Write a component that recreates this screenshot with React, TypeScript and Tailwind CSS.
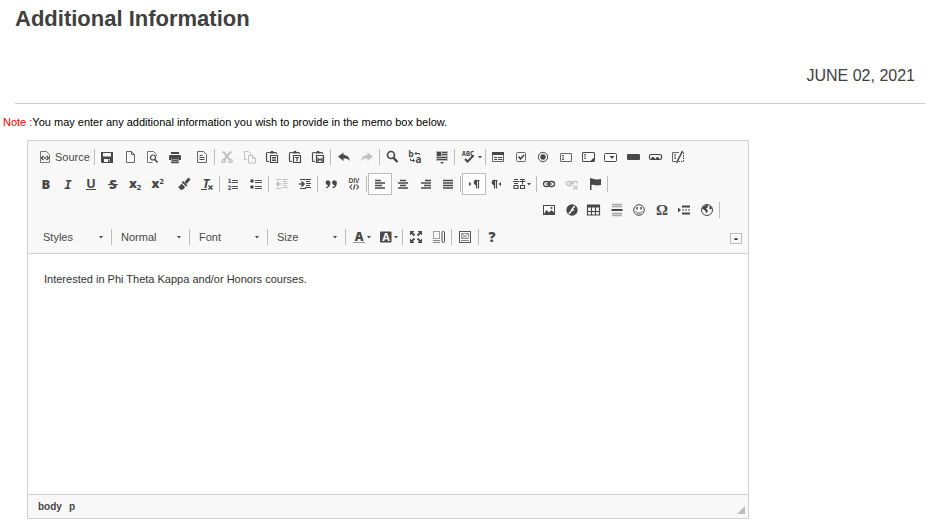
import React from "react";

const INK = "#484848";

type Part = { children: React.ReactNode; className?: string };

function Svg({ children, wide }: { children: React.ReactNode; wide?: boolean }) {
  return (
    <svg
      width={wide ? 20 : 16}
      height={16}
      viewBox={wide ? "0 0 20 16" : "0 0 16 16"}
      fill="none"
      stroke={INK}
      strokeWidth={1}
      aria-hidden="true"
      className="shrink-0 overflow-visible"
    >
      {children}
    </svg>
  );
}

type GlyphProps = {
  x: number;
  y: number;
  size: number;
  children: string;
  family?: string;
  weight?: number;
  italic?: boolean;
  color?: string;
};

function Glyph({ x, y, size, children, family = "DejaVu Sans, sans-serif", weight = 700, italic, color = INK }: GlyphProps) {
  return (
    <text
      x={x}
      y={y}
      fontSize={size}
      fontFamily={family}
      fontWeight={weight}
      fontStyle={italic ? "italic" : "normal"}
      fill={color}
      stroke="none"
      textAnchor="middle"
    >
      {children}
    </text>
  );
}

const page = "M4.500 2.500h5l3 3v8h-8z M9.500 2.500v3h3";
const OPEN = "Open Sans, sans-serif";

const clipboard = (
  <>
    <path d="M5 12.500H3.500a1 1 0 0 1-1-1v-7a1 1 0 0 1 1-1h2M10 3.500h1.500a1 1 0 0 1 1 1v.5" strokeWidth={1.200} />
    <path d="M5.500 4.500v-1.500h1l.5-1h2l.5 1h1v1.500z" fill={INK} stroke="none" />
    <path d="M6.500 6.500h7v7h-7z" fill="#f8f8f8" strokeWidth={1.200} />
  </>
);

const icons: Record<string, React.ReactNode> = {
  source: (
    <>
      <path d="M3.500 2.500h6l3 3v8h-9z" stroke="#777" />
      <path d="M6.500 7l-2 2 2 2M9.500 7l2 2-2 2M7 9h2" strokeWidth={1.400} />
    </>
  ),
  save: (
    <>
      <path d="M2 3h12v11H3l-1-1z" fill={INK} stroke="none" />
      <path d="M4 4h8v3.500H4zM5 10h6v3H5z" fill="#f8f8f8" stroke="none" />
      <path d="M9 10.500h1.500V13H9z" fill={INK} stroke="none" />
    </>
  ),
  newpage: <path d={page} stroke="#666" />,
  preview: (
    <>
      <path d="M12.500 7V5.500l-3-3h-6v11h5" stroke="#777" />
      <circle cx="9" cy="8.500" r="2.500" strokeWidth={1.200} />
      <path d="M10.800 10.500l2.700 3" strokeWidth={1.600} />
    </>
  ),
  print: (
    <>
      <path d="M4 3h8v2H4zM2.500 6h11l.5 1v4h-2V9H4v2H2V7z" fill={INK} stroke="none" />
      <path d="M5 9.500h6v4H5z M6 11.500h4" strokeWidth={1.300} />
    </>
  ),
  templates: (
    <>
      <path d="M3.500 2.500h6l3 3v8h-9z" stroke="#666" />
      <path d="M5.500 6.500h3M5.500 8.500h5M5.500 10.500h5" strokeWidth={1.200} />
    </>
  ),
  cut: (
    <>
      <path d="M4 2.500l6.500 8M12 2.500l-6.500 8" strokeWidth={2} />
      <circle cx="4.500" cy="12" r="1.600" strokeWidth={1.500} />
      <circle cx="11.500" cy="12" r="1.600" strokeWidth={1.500} />
    </>
  ),
  copy: (
    <>
      <path d="M5 10.500H2.500v-8h4l2 2V6" />
      <path d="M6.500 6.500h4l3 3v4.500h-7zM10.500 6.500v3h3" />
    </>
  ),
  paste: (
    <>
      {clipboard}
      <path d="M8 8.500h4M8 10h4M8 11.500h4" />
    </>
  ),
  pastetext: (
    <>
      {clipboard}
      <path d="M8 8.500h4M10 8.500V12.500" strokeWidth={1.200} />
    </>
  ),
  pasteword: (
    <>
      {clipboard}
      <path d="M8 8.500v3.500l2-2 2 2V8.500" strokeWidth={1.200} />
    </>
  ),
  undo: <path d="M2 7.500L7.500 3.500v2.500c3.500 0 6 2 6.200 6-1.500-2.300-3.500-2.700-6.200-2.500v2.500z" fill={INK} stroke="none" />,
  redo: <path d="M14 7.500L8.500 3.500v2.500C5 6 2.500 8 2.300 12c1.500-2.300 3.500-2.700 6.200-2.500v2.500z" fill={INK} stroke="none" />,
  find: (
    <>
      <circle cx="7" cy="6" r="3.500" strokeWidth={1.700} />
      <path d="M9.500 8.800l4 4.200" strokeWidth={2.400} />
    </>
  ),
  replace: (
    <>
      <Glyph x={4} y={8} size={8.500} family={OPEN}>b</Glyph>
      <Glyph x={11.500} y={14} size={10} family={OPEN}>a</Glyph>
      <path d="M12.500 6V4.500H8M9.500 3L8 4.500 9.500 6M3.500 9.500v2h4M6 10l1.500 1.500L6 13" />
    </>
  ),
  selectall: (
    <>
      <path d="M2 2h12v10H2z" fill="#bbb" stroke="none" />
      <path d="M3 3h4v4H3z" fill={INK} stroke="none" />
      <path d="M8 3.500h5M8 5.500h5M3 8.500h10M3 10.500h10" strokeWidth={1.200} />
      <path d="M6 13h4l-2 2z" fill={INK} stroke="none" />
    </>
  ),
  form: (
    <>
      <path d="M2.500 3.500h11v9h-11z" stroke="#666" />
      <path d="M2 3h12v3H2z" fill={INK} stroke="none" />
      <path d="M4 8.500h3M8 8.500h4.500M4 10.500h3M8 10.500h4.500" strokeWidth={1.200} />
    </>
  ),
  checkbox: (
    <>
      <rect x="3.500" y="3.500" width="9" height="9" rx="1" stroke="#666" />
      <path d="M5.500 7.500l2 2.500 3.500-4" strokeWidth={1.700} />
    </>
  ),
  radio: (
    <>
      <circle cx="8" cy="8" r="4.700" />
      <circle cx="8" cy="8" r="2.700" fill={INK} stroke="none" />
    </>
  ),
  textfield: (
    <>
      <rect x="2.500" y="4.500" width="11" height="8" rx=".5" stroke="#666" />
      <path d="M4 6.500h2M5 6.500v4M4 10.500h2" stroke="#666" />
    </>
  ),
  textarea: (
    <>
      <rect x="2.500" y="3.500" width="12" height="9" rx=".5" />
      <path d="M4 5.500h2M5 5.500v4M4 9.500h2" stroke="#777" />
      <path d="M14 8.500v4H10z" fill={INK} stroke="none" />
    </>
  ),
  select: (
    <>
      <rect x="2.500" y="4.500" width="12" height="8" rx="1" />
      <path d="M7.500 7h5L10 10z" fill={INK} stroke="none" />
    </>
  ),
  button: <rect x="2" y="5" width="13" height="6" rx="1" fill={INK} stroke="none" />,
  imagebutton: (
    <>
      <rect x="2.500" y="5.500" width="12" height="5" rx="1.500" strokeWidth={1.200} />
      <path d="M4.500 9.500l1.500-1.500 1.500 1.500zM9 9.500l1.500-1.500 1.500 1.500z" fill={INK} />
    </>
  ),
  hidden: (
    <>
      <path d="M9 3.500H2.500v9H6" stroke="#666" />
      <path d="M11 3.500h2.500v9H8" strokeDasharray="1.500 1" />
      <path d="M4 5.500h2M5 5.500v4M4 9.500h2" stroke="#777" />
      <path d="M12.500 2L6.500 14" strokeWidth={1.500} />
    </>
  ),
  bold: <Glyph x={8} y={12.500} size={13} family={OPEN} weight={800}>B</Glyph>,
  italic: <Glyph x={8} y={12.500} size={12.500} family="DejaVu Sans Mono, monospace" italic>I</Glyph>,
  underline: (
    <>
      <Glyph x={8} y={11.500} size={12.500} family={OPEN} weight={700}>U</Glyph>
      <path d="M3 13.500h10" />
    </>
  ),
  strike: (
    <>
      <Glyph x={8} y={12.500} size={13} family={OPEN} weight={800}>S</Glyph>
      <path d="M3 8.500h10" />
    </>
  ),
  sub: (
    <>
      <Glyph x={6} y={12} size={12.500} family={OPEN} weight={800}>x</Glyph>
      <Glyph x={12} y={14} size={7}>2</Glyph>
    </>
  ),
  sup: (
    <>
      <Glyph x={5.500} y={12} size={12.500} family={OPEN} weight={800}>x</Glyph>
      <Glyph x={11.800} y={7.500} size={7}>2</Glyph>
    </>
  ),
  brush: (
    <>
      <path d="M13.500 2.500L9.500 7" strokeWidth={2.800} />
      <path d="M7 5l4.500 4.500-1.500 1L5.800 6.500z" fill={INK} stroke="none" />
      <path d="M5.300 7.500l3.700 3.500c-1 2-2.500 3-4 3L2 11c1.500-.5 2.500-1.500 3.300-3.500z" fill={INK} stroke="none" />
    </>
  ),
  removeformat: (
    <>
      <Glyph x={7} y={12} size={12.500} family={OPEN} italic>T</Glyph>
      <path d="M2 13.500h6" />
      <path d="M9.500 9.500l4 4M13.500 9.500l-4 4" strokeWidth={1.500} />
    </>
  ),
  ol: (
    <>
      <Glyph x={4.500} y={7} size={6}>1</Glyph>
      <Glyph x={4.500} y={14} size={6}>2</Glyph>
      <path d="M7 4.500h6M7 6.500h6M7 10.500h6M7 12.500h6" stroke="#555" />
    </>
  ),
  ul: (
    <>
      <circle cx="4" cy="5" r="1.800" fill={INK} stroke="none" />
      <circle cx="4" cy="11" r="1.800" fill={INK} stroke="none" />
      <path d="M7 4.500h7M7 6.500h7M7 10.500h7M7 12.500h7" stroke="#555" />
    </>
  ),
  outdent: (
    <>
      <path d="M8 3.500h6M9 5.500h4M9 7.500h5M9 9.500h4M8 11.500h6M2 12.500h5M2 3.500h5" />
      <path d="M7.500 8H3M5 5.500L2.500 8 5 10.500" strokeWidth={1.500} />
    </>
  ),
  indent: (
    <>
      <path d="M3 3.500h11M9 5.500h4M9 7.500h5M9 9.500h4M8 11.500h6M3 12.500h6" />
      <path d="M2 8h4.500M4.500 5.500L7 8l-2.500 2.500" strokeWidth={1.600} />
    </>
  ),
  quote: (
    <path
      d="M4.800 4.200a2.500 2.500 0 0 1 2.600 2.500c0 2.700-1.300 4.500-4 5.600l-.5-1c1.300-.6 2-1.300 2.200-2.300a2.400 2.400 0 0 1-.3-4.800zM11.300 4.200a2.500 2.500 0 0 1 2.600 2.500c0 2.700-1.300 4.500-4 5.600l-.5-1c1.300-.6 2-1.300 2.200-2.300a2.400 2.400 0 0 1-.3-4.800z"
      fill={INK}
      stroke="none"
    />
  ),
  div: (
    <>
      <Glyph x={8} y={7} size={6.500} family="Liberation Sans, sans-serif">DIV</Glyph>
      <path d="M6 8.500L4 11l2 2.500M10.500 8.500l2 2.500-2 2.500M9 8.500l-1.500 5" strokeWidth={1.200} />
    </>
  ),
  left: <path d="M3 4.500h6M3 7h10M3 9.500h7M3 12h10" strokeWidth={1.600} />,
  center: <path d="M5 4.500h6M3 7h10M5 9.500h6M3 12h10" strokeWidth={1.600} />,
  right: <path d="M7 4.500h6M3 7h10M6 9.500h7M3 12h10" strokeWidth={1.600} />,
  justify: <path d="M3 4.500h10M3 7h10M3 9.500h10M3 12h10" strokeWidth={1.600} />,
  ltr: (
    <>
      <path d="M3 6l2.500 2L3 10z" fill={INK} stroke="none" />
      <path d="M13.500 4.500H9.500M10.500 4v8.500M12.500 4v8.500" strokeWidth={1.200} />
      <path d="M10.500 4a2.400 2.400 0 0 0 0 4.800z" fill={INK} />
    </>
  ),
  rtl: (
    <>
      <path d="M13 6l-2.500 2 2.500 2z" fill={INK} stroke="none" />
      <path d="M9.500 4.500H5.500M6.500 4v8.500M8.500 4v8.500" strokeWidth={1.200} />
      <path d="M6.500 4a2.400 2.400 0 0 0 0 4.800z" fill={INK} />
    </>
  ),
  language: (
    <>
      <path d="M3 3.500h4M2 5.500h6M3 7.500h4M3 9.500h4v3H3z" strokeWidth={1.100} />
      <path d="M9 3.500h5M11.500 3.500v5M8.500 5.500h6M9.500 9.500h4v3h-4z" strokeWidth={1.100} />
    </>
  ),
  link: (
    <>
      <rect x="2.500" y="5.500" width="6" height="5" rx="2.500" strokeWidth={1.300} />
      <rect x="7.500" y="5.500" width="6" height="5" rx="2.500" strokeWidth={1.300} />
      <path d="M5 8h6" strokeWidth={1.200} />
    </>
  ),
  unlink: (
    <>
      <path d="M8 9.500H4.500a2 2 0 0 1 0-4h1.500a2 2 0 0 1 2 2M8 7.500a2 2 0 0 1 2-2h1.500a2 2 0 0 1 2 2M5 7.500h5" strokeWidth={1.300} />
      <path d="M9.500 9.500l4 4M13.500 9.500l-4 4" strokeWidth={1.300} />
    </>
  ),
  flag: <path d="M3 2h1.500v1c2-1 3.500.3 5 .5 1.500.2 3-.5 4.500-.5v6c-1.500 0-3 .7-4.500.5S6 8.500 4.500 9v5H3z" fill={INK} stroke="none" />,
  image: (
    <>
      <rect x="2.500" y="3.500" width="11" height="9" />
      <path d="M3 12l2.500-4L8 10.500 10.500 8l3 3v1.500H3z" fill={INK} stroke="none" />
      <circle cx="10.500" cy="6" r="1" fill={INK} stroke="none" />
    </>
  ),
  flash: (
    <>
      <circle cx="8" cy="8" r="5.700" fill={INK} stroke="none" />
      <path d="M11 4.500C8 4.500 7.500 11.500 4.500 11.500M7 8h3" stroke="#f8f8f8" strokeWidth={1.600} />
    </>
  ),
  table: (
    <>
      <path d="M1.500 3.500h12v9.500h-12zM5.500 4v9M9.500 4v9M2 9.500h12" strokeWidth={1.200} />
      <path d="M1 2.500h13v3H1z" fill={INK} stroke="none" />
    </>
  ),
  hr: (
    <>
      <path d="M3 2.500h10M3 4.500h10M3 11.500h10M3 13.500h10" stroke="#aaa" strokeWidth={1.300} />
      <path d="M2.500 8h11" strokeWidth={2} />
    </>
  ),
  smiley: (
    <>
      <circle cx="8" cy="8" r="5.300" />
      <path d="M6 5v2.500M10 5v2.500" strokeWidth={1.500} />
      <path d="M5 9.500c1.500 2.300 4.500 2.300 6 0" />
    </>
  ),
  omega: <Glyph x={8} y={13} size={15} family="Liberation Serif, serif">Ω</Glyph>,
  pagebreak: (
    <>
      <path d="M2 5.500l3 2.500-3 2.500z" fill={INK} stroke="none" />
      <path d="M6 4.500h8M6 11.500h8" strokeWidth={2} />
      <path d="M6 8h8" strokeDasharray="2 1" />
    </>
  ),
  globe: (
    <>
      <circle cx="8" cy="8" r="5.500" />
      <path d="M4 4.500L7.500 3l2 .5-1 2-1.500 1 2 2-1.500 3-1.500-3-3-2zM11 3.500l2 2.500-1 1.500-2-1z" fill={INK} stroke="none" />
    </>
  ),
  textcolor: (
    <>
      <Glyph x={8} y={11.500} size={12} family={OPEN} weight={800}>A</Glyph>
      <path d="M2 13.500h12" stroke="#999" />
    </>
  ),
  bgcolor: (
    <>
      <rect x="2" y="2.500" width="11.500" height="11" rx="1" fill={INK} stroke="none" />
      <Glyph x={8} y={12} size={11} family={OPEN} color="#f8f8f8">A</Glyph>
    </>
  ),
  maximize: (
    <>
      <path d="M6.500 6.500L3.500 3.500M9.500 6.500l3-3M6.500 9.500l-3 3M9.500 9.500l3 3" strokeWidth={1.800} />
      <path d="M2 2h4.500L2 6.500zM14 2v4.500L9.500 2zM2 14V9.500L6.500 14zM14 14H9.500L14 9.500z" fill={INK} stroke="none" />
    </>
  ),
  showblocks: (
    <>
      <rect x="2.500" y="2.500" width="6" height="7" strokeDasharray="1 1" />
      <path d="M2 11.500h7M2 13.500h7" stroke="#888" />
      <rect x="11" y="2.500" width="2.500" height="11" rx="1" />
    </>
  ),
  picture: (
    <>
      <rect x="2.500" y="2.500" width="11" height="11" stroke="#555" />
      <path d="M4.500 4.500h7v5h-7z" stroke="#999" />
      <path d="M5 5l3 2.500L11 5M5 9l2.500-2 3 3M4 11.500h8" stroke="#888" />
    </>
  ),
  help: <Glyph x={8} y={13} size={14} family={OPEN} weight={800}>?</Glyph>,
};

function Caret() {
  return (
    <svg width="4" height="3" viewBox="0 0 4 3" aria-hidden="true" className="pointer-events-none shrink-0">
      <path d="M0 0h4L2 2.500z" fill={INK} />
    </svg>
  );
}

function Tool({ name, icon, off, on }: { name: string; icon: string; off?: boolean; on?: boolean }) {
  return (
    <button
      type="button"
      aria-label={name}
      aria-pressed={on}
      disabled={off}
      className={
        "flex h-[22px] min-w-0 flex-1 items-center justify-center " +
        (on ? "border border-[#bcbcbc] bg-white " : "") +
        (off ? "opacity-30" : "")
      }
    >
      <Svg>{icons[icon]}</Svg>
    </button>
  );
}

function MenuTool({ name, icon }: { name: string; icon: string }) {
  return (
    <button type="button" aria-label={name} className="flex h-[22px] w-7 min-w-0 shrink items-center justify-center">
      <Svg>{icons[icon]}</Svg>
      <Caret />
    </button>
  );
}

function Group({ children, className }: Part) {
  return <div className={"flex items-center " + className}>{children}</div>;
}

function Sep() {
  return <span className="mx-px h-4 w-px shrink-0 bg-[#bcbcbc]" />;
}

function Combo({ label }: { label: string }) {
  return (
    <label className="grid w-[75px] items-center">
      <select
        aria-label={label}
        className="col-start-1 row-start-1 h-[22px] w-full appearance-none bg-transparent pl-2 text-[11px] text-[#484848]"
      >
        <option>{label}</option>
      </select>
      <span className="pointer-events-none col-start-1 row-start-1 mr-[7px] justify-self-end">
        <Caret />
      </span>
    </label>
  );
}

function Toolbar() {
  return (
    <div className="flex flex-col gap-[5px] border-b border-[#d1d1d1] bg-[#f8f8f8] py-[5px] pl-[7px]">
      <div className="flex items-center">
        <Group className="w-[58px]">
          <button type="button" className="flex h-[22px] items-center gap-[2px] pl-[2px] text-[11px] text-[#484848]">
            <Svg>{icons.source}</Svg>
            Source
          </button>
        </Group>
        <Sep />
        <Group className="mr-1 w-[90px]">
          <Tool name="Save" icon="save" />
          <Tool name="New Page" icon="newpage" />
          <Tool name="Preview" icon="preview" />
          <Tool name="Print" icon="print" />
        </Group>
        <Group className="w-[23px]">
          <Tool name="Templates" icon="templates" />
        </Group>
        <Sep />
        <Group className="w-[113px]">
          <Tool name="Cut" icon="cut" off />
          <Tool name="Copy" icon="copy" off />
          <Tool name="Paste" icon="paste" />
          <Tool name="Paste as plain text" icon="pastetext" />
          <Tool name="Paste from Word" icon="pasteword" />
        </Group>
        <Sep />
        <Group className="w-[46px]">
          <Tool name="Undo" icon="undo" />
          <Tool name="Redo" icon="redo" off />
        </Group>
        <Sep />
        <Group className="mr-1 w-[45px]">
          <Tool name="Find" icon="find" />
          <Tool name="Replace" icon="replace" />
        </Group>
        <Group className="w-[23px]">
          <Tool name="Select All" icon="selectall" />
        </Group>
        <Sep />
        <Group className="w-7">
          <button type="button" aria-label="Spell Check" className="flex h-[22px] w-7 items-center justify-center">
            <Svg wide>
              <Glyph x={10} y={7} size={7} family="DejaVu Sans Mono, monospace">ABC</Glyph>
              <path d="M7 10l2.500 2.500 6-6" strokeWidth={2} />
            </Svg>
            <Caret />
          </button>
        </Group>
        <Sep />
        <Group className="w-[202px]">
          <Tool name="Form" icon="form" />
          <Tool name="Checkbox" icon="checkbox" />
          <Tool name="Radio Button" icon="radio" />
          <Tool name="Text Field" icon="textfield" />
          <Tool name="Textarea" icon="textarea" />
          <Tool name="Selection Field" icon="select" />
          <Tool name="Button" icon="button" />
          <Tool name="Image Button" icon="imagebutton" />
          <Tool name="Hidden Field" icon="hidden" />
        </Group>
      </div>

      <div className="flex flex-col gap-1">
        <div className="flex items-center">
          <Group className="mr-1 w-[134px]">
            <Tool name="Bold" icon="bold" />
            <Tool name="Italic" icon="italic" />
            <Tool name="Underline" icon="underline" />
            <Tool name="Strikethrough" icon="strike" />
            <Tool name="Subscript" icon="sub" />
            <Tool name="Superscript" icon="sup" />
          </Group>
          <Group className="w-[45px]">
            <Tool name="Copy Formatting" icon="brush" />
            <Tool name="Remove Format" icon="removeformat" />
          </Group>
          <Sep />
          <Group className="w-[46px]">
            <Tool name="Numbered List" icon="ol" />
            <Tool name="Bulleted List" icon="ul" />
          </Group>
          <Sep />
          <Group className="w-[46px]">
            <Tool name="Decrease Indent" icon="outdent" off />
            <Tool name="Increase Indent" icon="indent" />
          </Group>
          <Sep />
          <Group className="w-[46px]">
            <Tool name="Block Quote" icon="quote" />
            <Tool name="Create Div Container" icon="div" />
          </Group>
          <Sep />
          <Group className="w-[91px]">
            <Tool name="Align Left" icon="left" on />
            <Tool name="Center" icon="center" />
            <Tool name="Align Right" icon="right" />
            <Tool name="Justify" icon="justify" />
          </Group>
          <Sep />
          <Group className="w-[73px]">
            <Tool name="Text direction from left to right" icon="ltr" on />
            <Tool name="Text direction from right to left" icon="rtl" />
            <MenuTool name="Set language" icon="language" />
          </Group>
          <Sep />
          <Group className="w-[68px]">
            <Tool name="Link" icon="link" />
            <Tool name="Unlink" icon="unlink" off />
            <Tool name="Anchor" icon="flag" />
          </Group>
          <Sep />
        </div>
        <div className="flex items-center justify-end pr-[27px]">
          <Group className="w-[180px]">
            <Tool name="Image" icon="image" />
            <Tool name="Flash" icon="flash" />
            <Tool name="Table" icon="table" />
            <Tool name="Insert Horizontal Line" icon="hr" />
            <Tool name="Smiley" icon="smiley" />
            <Tool name="Insert Special Character" icon="omega" />
            <Tool name="Insert Page Break" icon="pagebreak" />
            <Tool name="IFrame" icon="globe" />
          </Group>
          <Sep />
        </div>
      </div>

      <div className="flex items-center">
        <Combo label="Styles" />
        <Sep />
        <Combo label="Normal" />
        <Sep />
        <Combo label="Font" />
        <Sep />
        <Combo label="Size" />
        <Sep />
        <Group className="w-[54px]">
          <MenuTool name="Text Color" icon="textcolor" />
          <MenuTool name="Background Color" icon="bgcolor" />
        </Group>
        <Sep />
        <Group className="w-[46px]">
          <Tool name="Maximize" icon="maximize" />
          <Tool name="Show Blocks" icon="showblocks" />
        </Group>
        <Sep />
        <Group className="w-6">
          <Tool name="Picture" icon="picture" />
        </Group>
        <Sep />
        <Group className="w-6">
          <Tool name="About" icon="help" />
        </Group>
        <button
          type="button"
          aria-label="Collapse Toolbar"
          className="mr-[6px] mb-1 ml-auto flex h-[11px] w-3 items-center justify-center self-end border border-[#bcbcbc]"
        >
          <svg width="4" height="2" viewBox="0 0 4 2" aria-hidden="true">
            <path d="M0 2L1 0h2l1 2z" fill={INK} />
          </svg>
        </button>
      </div>
    </div>
  );
}

export default function App() {
  return (
    <main className="bg-white pt-[5px] font-['Liberation_Sans',Arial,sans-serif]">
      <header className="mr-[7px] ml-[15px] border-b border-[#ccc] pb-[15px]">
        <h1 className="text-[22px] leading-7 font-bold text-[#404040]">Additional Information</h1>
        <p className="mt-[31px] pr-[10px] text-right text-base leading-6 text-[#404040]">JUNE 02, 2021</p>
      </header>
      <p className="mt-[10px] pl-[3px] text-[11px] leading-4 text-black">
        <span className="text-[#ff0000]">Note :</span>You may enter any additional information you wish to provide in the memo box below.
      </p>
      <section className="mt-[10px] ml-[27px] max-w-[722px] border border-[#d1d1d1]">
        <Toolbar />
        <textarea
          aria-label="Additional information"
          defaultValue="Interested in Phi Theta Kappa and/or Honors courses."
          className="block h-60 w-full resize-none bg-white px-4 pt-[17px] text-[11px] leading-4 text-[#333] outline-none"
        />
        <footer className="flex h-6 items-center gap-[7px] border-t border-[#d1d1d1] bg-[#f8f8f8] pl-[10px] text-[10px] font-bold text-[#484848]">
          <a href="#body">body</a>
          <a href="#p">p</a>
          <svg width="8" height="8" viewBox="0 0 8 8" aria-hidden="true" className="mr-[3px] mb-1 ml-auto self-end">
            <path d="M8 0v8H0z" fill="#bcbcbc" />
          </svg>
        </footer>
      </section>
    </main>
  );
}
